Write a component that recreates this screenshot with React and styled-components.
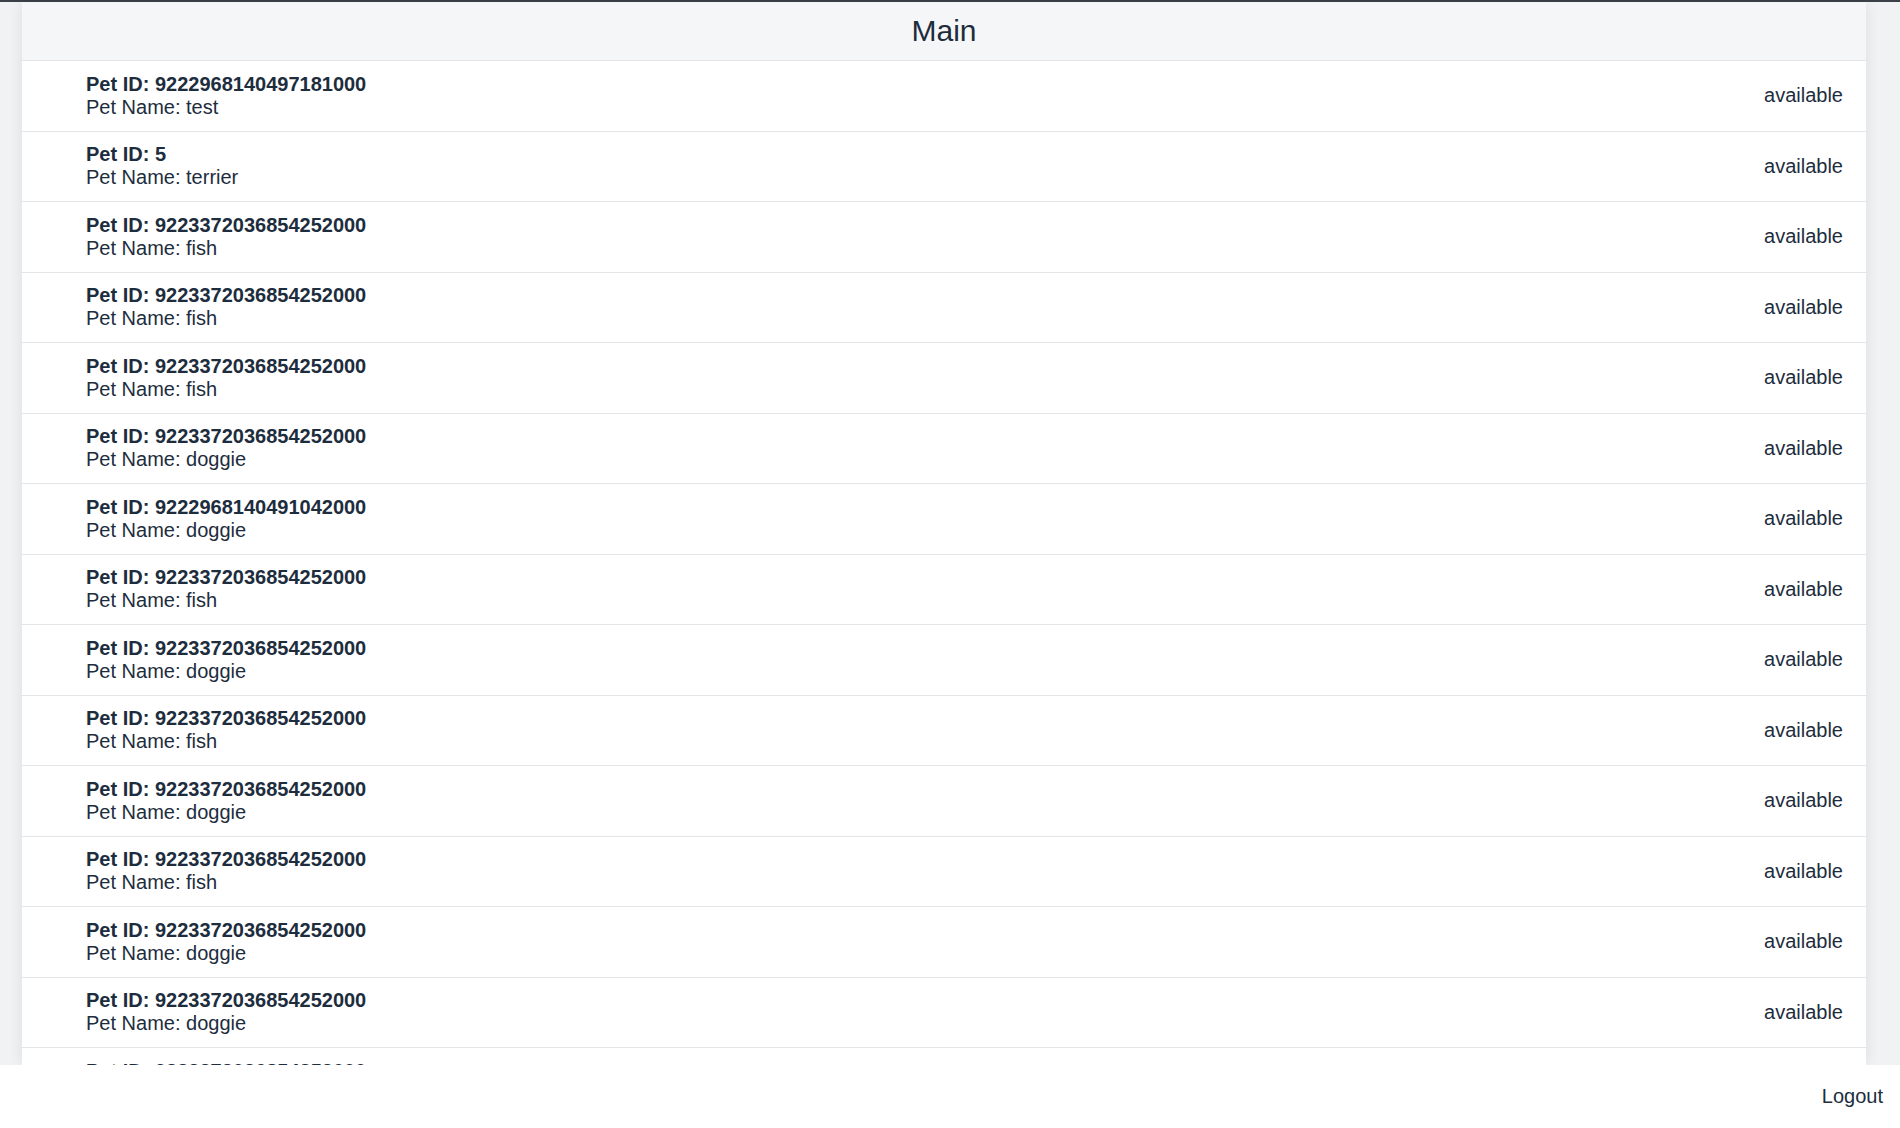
import styled, { createGlobalStyle } from "styled-components";

const pets = [
    { id: "9222968140497181000", name: "test" },
    { id: "5", name: "terrier" },
    { id: "9223372036854252000", name: "fish" },
    { id: "9223372036854252000", name: "fish" },
    { id: "9223372036854252000", name: "fish" },
    { id: "9223372036854252000", name: "doggie" },
    { id: "9222968140491042000", name: "doggie" },
    { id: "9223372036854252000", name: "fish" },
    { id: "9223372036854252000", name: "doggie" },
    { id: "9223372036854252000", name: "fish" },
    { id: "9223372036854252000", name: "doggie" },
    { id: "9223372036854252000", name: "fish" },
    { id: "9223372036854252000", name: "doggie" },
    { id: "9223372036854252000", name: "doggie" },
    { id: "9223372036854252000", name: "fish" },
];

const GlobalStyle = createGlobalStyle`
    html, body {
        margin: 0;
        padding: 0;
        background: #fff;
        font-family: "Liberation Sans", Arial, sans-serif;
        color: #1d2d3e;
    }
`;

const App = () => {
    return (
        <>
            <GlobalStyle />
            <Screen>
                <Letterbox>
                    <Page>
                        <Header>
                            <Title>Main</Title>
                        </Header>
                        <List>
                            {pets.map((pet, i) => (
                                <Item key={i}>
                                    <Info>
                                        <ItemTitle>Pet ID: {pet.id}</ItemTitle>
                                        <ItemDesc>Pet Name: {pet.name}</ItemDesc>
                                    </Info>
                                    <Status>available</Status>
                                </Item>
                            ))}
                        </List>
                    </Page>
                </Letterbox>
                <Footer>
                    <LogoutLink>Logout</LogoutLink>
                </Footer>
            </Screen>
        </>
    );
};

const Screen = styled.div`
    height: 100vh;
    box-sizing: border-box;
    border-top: 2px solid #3b4049;
    display: flex;
    flex-direction: column;
`;

const Letterbox = styled.div`
    flex: 1;
    min-height: 0;
    display: flex;
    padding: 0 34px 0 22px;
    background: #f1f2f3;
`;

const Page = styled.div`
    flex: 1;
    min-width: 0;
    display: flex;
    flex-direction: column;
    background: #fff;
    box-shadow: 0 0 14px rgba(0, 0, 0, 0.09);
`;

const Header = styled.div`
    height: 59px;
    flex-shrink: 0;
    box-sizing: border-box;
    display: flex;
    align-items: center;
    justify-content: center;
    background: #f5f6f7;
    border-bottom: 1px solid #e5e5e5;
`;

const Title = styled.h1`
    margin: 0;
    font-size: 30px;
    font-weight: 400;
    color: #1d2d3e;
`;

const List = styled.div`
    flex: 1;
    min-height: 0;
    overflow: hidden;
`;

const Item = styled.div`
    height: 70.5px;
    box-sizing: border-box;
    display: flex;
    align-items: center;
    justify-content: space-between;
    padding: 0 23px 0 64px;
    border-bottom: 1px solid #e5e5e5;
`;

const Info = styled.div`
    display: flex;
    flex-direction: column;
`;

const ItemTitle = styled.span`
    font-size: 20px;
    font-weight: 700;
    line-height: 23px;
`;

const ItemDesc = styled.span`
    font-size: 20px;
    line-height: 23px;
`;

const Status = styled.span`
    font-size: 20px;
`;

const Footer = styled.div`
    height: 63px;
    flex-shrink: 0;
    display: flex;
    align-items: center;
    justify-content: flex-end;
    padding-right: 17px;
    background: #fff;
`;

const LogoutLink = styled.span`
    font-size: 20px;
    color: #1d2d3e;
    cursor: pointer;
`;

export default App;
